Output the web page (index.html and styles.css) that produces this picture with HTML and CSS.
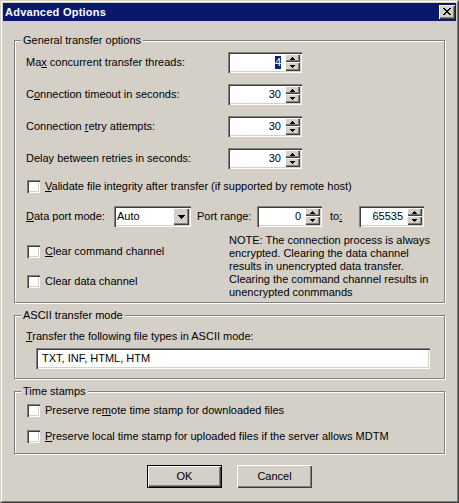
FILE: index.html
```html
<!DOCTYPE html>
<html>
<head>
<meta charset="utf-8">
<title>Advanced Options</title>
<link rel="stylesheet" href="styles.css">
</head>
<body>
<div class="window">
  <div class="frame">
    <div class="titlebar">
      <span class="title">Advanced Options</span>
      <span class="close-btn"><svg width="8" height="7" viewBox="0 0 8 7"><path d="M0 0h2v1h-2z M6 0h2v1h-2z M1 1h2v1h-2z M5 1h2v1h-2z M2 2h4v1h-4z M3 3h2v1h-2z M2 4h4v1h-4z M1 5h2v1h-2z M5 5h2v1h-2z M0 6h2v1h-2z M6 6h2v1h-2z" fill="#000"/></svg></span>
    </div>
    <div class="content">
      <div class="group g-general">
        <span class="group-title">General transfer options</span>
        <div class="field-grid">
          <span class="field-label">Ma<u>x</u> concurrent transfer threads:</span>
          <div class="spin spin-wide"><span class="spin-val"><span class="selected">4</span></span><span class="spin-btns"><span class="sb"><svg width="5" height="3" viewBox="0 0 5 3"><path d="M2 0h1v1h-1z M1 1h3v1h-3z M0 2h5v1h-5z" fill="#000"/></svg></span><span class="sb"><svg width="5" height="3" viewBox="0 0 5 3"><path d="M0 0h5v1h-5z M1 1h3v1h-3z M2 2h1v1h-1z" fill="#000"/></svg></span></span></div>

          <span class="field-label">C<u>o</u>nnection timeout in seconds:</span>
          <div class="spin spin-wide"><span class="spin-val">30</span><span class="spin-btns"><span class="sb"><svg width="5" height="3" viewBox="0 0 5 3"><path d="M2 0h1v1h-1z M1 1h3v1h-3z M0 2h5v1h-5z" fill="#000"/></svg></span><span class="sb"><svg width="5" height="3" viewBox="0 0 5 3"><path d="M0 0h5v1h-5z M1 1h3v1h-3z M2 2h1v1h-1z" fill="#000"/></svg></span></span></div>

          <span class="field-label">Connection <u>r</u>etry attempts:</span>
          <div class="spin spin-wide"><span class="spin-val">30</span><span class="spin-btns"><span class="sb"><svg width="5" height="3" viewBox="0 0 5 3"><path d="M2 0h1v1h-1z M1 1h3v1h-3z M0 2h5v1h-5z" fill="#000"/></svg></span><span class="sb"><svg width="5" height="3" viewBox="0 0 5 3"><path d="M0 0h5v1h-5z M1 1h3v1h-3z M2 2h1v1h-1z" fill="#000"/></svg></span></span></div>

          <span class="field-label">Delay between retries in seconds:</span>
          <div class="spin spin-wide"><span class="spin-val">30</span><span class="spin-btns"><span class="sb"><svg width="5" height="3" viewBox="0 0 5 3"><path d="M2 0h1v1h-1z M1 1h3v1h-3z M0 2h5v1h-5z" fill="#000"/></svg></span><span class="sb"><svg width="5" height="3" viewBox="0 0 5 3"><path d="M0 0h5v1h-5z M1 1h3v1h-3z M2 2h1v1h-1z" fill="#000"/></svg></span></span></div>
        </div>

        <div class="check-row row-validate"><span class="cb"></span><span class="check-text"><u>V</u>alidate file integrity after transfer (if supported by remote host)</span></div>

        <div class="port-row">
          <span class="lbl-mode"><u>D</u>ata port mode:</span>
          <div class="select"><span class="select-val">Auto</span><span class="select-btn"><svg width="7" height="4" viewBox="0 0 7 4"><path d="M0 0h7v1h-7z M1 1h5v1h-5z M2 2h3v1h-3z M3 3h1v1h-1z" fill="#000"/></svg></span></div>
          <span class="lbl-range">Port range:</span>
          <div class="spin spin-port"><span class="spin-val">0</span><span class="spin-btns"><span class="sb"><svg width="5" height="3" viewBox="0 0 5 3"><path d="M2 0h1v1h-1z M1 1h3v1h-3z M0 2h5v1h-5z" fill="#000"/></svg></span><span class="sb"><svg width="5" height="3" viewBox="0 0 5 3"><path d="M0 0h5v1h-5z M1 1h3v1h-3z M2 2h1v1h-1z" fill="#000"/></svg></span></span></div>
          <span class="lbl-to">to<u>:</u></span>
          <div class="spin spin-port"><span class="spin-val">65535</span><span class="spin-btns"><span class="sb"><svg width="5" height="3" viewBox="0 0 5 3"><path d="M2 0h1v1h-1z M1 1h3v1h-3z M0 2h5v1h-5z" fill="#000"/></svg></span><span class="sb"><svg width="5" height="3" viewBox="0 0 5 3"><path d="M0 0h5v1h-5z M1 1h3v1h-3z M2 2h1v1h-1z" fill="#000"/></svg></span></span></div>
        </div>

        <div class="bottom">
          <div class="checks">
            <div class="check-row"><span class="cb"></span><span class="check-text"><u>C</u>lear command channel</span></div>
            <div class="check-row row-second"><span class="cb"></span><span class="check-text">Clear data channel</span></div>
          </div>
          <p class="note">NOTE: The connection process is always encrypted. Clearing the data channel results in unencrypted data transfer. Clearing the command channel results in unencrypted conmmands</p>
        </div>
      </div>

      <div class="group g-ascii">
        <span class="group-title">ASCII transfer mode</span>
        <div class="ascii-label"><u>T</u>ransfer the following file types in ASCII mode:</div>
        <div class="textbox">TXT, INF, HTML, HTM</div>
      </div>

      <div class="group g-time">
        <span class="group-title">Time stamps</span>
        <div class="check-row"><span class="cb"></span><span class="check-text">Preserve re<u>m</u>ote time stamp for downloaded files</span></div>
        <div class="check-row row-second-ts"><span class="cb"></span><span class="check-text"><u>P</u>reserve local time stamp for uploaded files if the server allows MDTM</span></div>
      </div>

      <div class="buttons">
        <span class="btn btn-default">OK</span>
        <span class="btn">Cancel</span>
      </div>
    </div>
  </div>
</div>
</body>
</html>
```

FILE: styles.css
```css
html, body {
  margin: 0;
  padding: 0;
  background: #d4d0c8;
}

body {
  font-family: "Liberation Sans", Arial, sans-serif;
  font-size: 11px;
  line-height: 13px;
  color: #000;
}

u {
  text-decoration: underline;
  text-underline-offset: 1px;
}

.window {
  width: 459px;
  height: 503px;
  box-sizing: border-box;
  border: 1px solid;
  border-color: #d4d0c8 #404040 #404040 #d4d0c8;
  background: #d4d0c8;
}

.frame {
  height: 100%;
  box-sizing: border-box;
  border: 1px solid;
  border-color: #fff #808080 #808080 #fff;
  padding: 1px;
}

.titlebar {
  height: 18px;
  background: #0a186c;
  display: flex;
  align-items: center;
  justify-content: space-between;
  padding: 0 1px 0 2px;
}

.title {
  color: #fff;
  font-weight: bold;
  font-size: 11px;
  letter-spacing: 0.25px;
}

.close-btn {
  width: 16px;
  height: 14px;
  box-sizing: border-box;
  background: #d4d0c8;
  box-shadow: inset 1px 1px #fff, inset -1px -1px #404040, inset -2px -2px #808080;
  display: flex;
  align-items: center;
  justify-content: center;
  padding: 0 1px 1px 0;
}

.close-btn svg {
  display: block;
}

.content {
  padding: 19px 11px 0 11px;
}

.group {
  position: relative;
  border: 1px solid #808080;
  box-shadow: inset 1px 1px #fff, 1px 1px #fff;
  padding: 11px 11px 3px 11px;
}

.group-title {
  position: absolute;
  top: -7px;
  left: 6px;
  padding: 0 2px;
  background: #d4d0c8;
}

.field-grid {
  display: grid;
  grid-template-columns: 202px 74px;
  grid-auto-rows: 21px;
  row-gap: 11px;
  align-items: center;
}

.spin {
  box-sizing: border-box;
  height: 21px;
  background: #fff;
  box-shadow: inset 1px 1px #808080, inset 2px 2px #404040, inset -1px -1px #fff, inset -2px -2px #d4d0c8;
  display: flex;
  align-items: stretch;
  padding: 2px;
}

.spin-wide {
  width: 74px;
}

.spin-port {
  width: 65px;
}

.spin-val {
  flex: 1;
  text-align: right;
  padding-right: 4px;
  display: flex;
  align-items: center;
  justify-content: flex-end;
}

.selected {
  background: #0a246a;
  color: #fff;
}

.spin-btns {
  width: 15px;
  display: grid;
  grid-template-rows: 8px 9px;
}

.sb {
  background: #d4d0c8;
  box-shadow: inset 1px 1px #fff, inset -1px -1px #404040, inset -2px -2px #808080;
  display: flex;
  align-items: center;
  justify-content: center;
  padding-right: 1px;
}

.sb svg {
  display: block;
}

.check-row {
  height: 21px;
  display: flex;
  align-items: center;
  padding-left: 1px;
}

.cb {
  width: 13px;
  height: 13px;
  box-sizing: border-box;
  background: #fff;
  box-shadow: inset 1px 1px #808080, inset 2px 2px #404040, inset -1px -1px #fff, inset -2px -2px #d4d0c8;
  flex: none;
}

.check-text {
  margin-left: 5px;
  white-space: nowrap;
}

.row-validate {
  margin-top: 7px;
}

.port-row {
  margin-top: 9px;
  height: 21px;
  display: flex;
  align-items: center;
}

.lbl-mode {
  width: 88px;
  flex: none;
}

.select {
  width: 77px;
  height: 21px;
  box-sizing: border-box;
  background: #fff;
  box-shadow: inset 1px 1px #808080, inset 2px 2px #404040, inset -1px -1px #fff, inset -2px -2px #d4d0c8;
  padding: 2px;
  display: flex;
  align-items: stretch;
  flex: none;
}

.select-val {
  flex: 1;
  padding-left: 1px;
  display: flex;
  align-items: center;
}

.select-btn {
  width: 16px;
  background: #d4d0c8;
  box-shadow: inset 1px 1px #fff, inset -1px -1px #404040, inset -2px -2px #808080;
  display: flex;
  align-items: center;
  justify-content: center;
}

.select-btn svg {
  display: block;
}

.lbl-range {
  margin-left: 6px;
  width: 60px;
  flex: none;
}

.lbl-to {
  margin-left: 8px;
  width: 29px;
  flex: none;
}

.bottom {
  margin-top: 7px;
  display: flex;
}

.checks {
  width: 203px;
  flex: none;
  padding-top: 7px;
}

.row-second {
  margin-top: 9px;
}

.note {
  margin: 0;
  width: 204px;
}

.g-ascii {
  margin-top: 12px;
  padding: 14px 14px 9px 11px;
}

.ascii-label {
  height: 13px;
}

.textbox {
  margin: 5px 0 0 10px;
  height: 21px;
  box-sizing: border-box;
  background: #fff;
  box-shadow: inset 1px 1px #808080, inset 2px 2px #404040, inset -1px -1px #fff, inset -2px -2px #d4d0c8;
  padding: 0 4px 0 6px;
  display: flex;
  align-items: center;
}

.g-time {
  margin-top: 12px;
  padding: 8px 11px 6px 11px;
}

.row-second-ts {
  margin-top: 5px;
}

.buttons {
  margin-top: 11px;
  display: flex;
  justify-content: center;
  gap: 15px;
}

.btn {
  width: 75px;
  height: 23px;
  box-sizing: border-box;
  background: #d4d0c8;
  box-shadow: inset 1px 1px #fff, inset -1px -1px #404040, inset -2px -2px #808080;
  display: flex;
  align-items: center;
  justify-content: center;
}

.btn-default {
  border: 1px solid #000;
}
```
